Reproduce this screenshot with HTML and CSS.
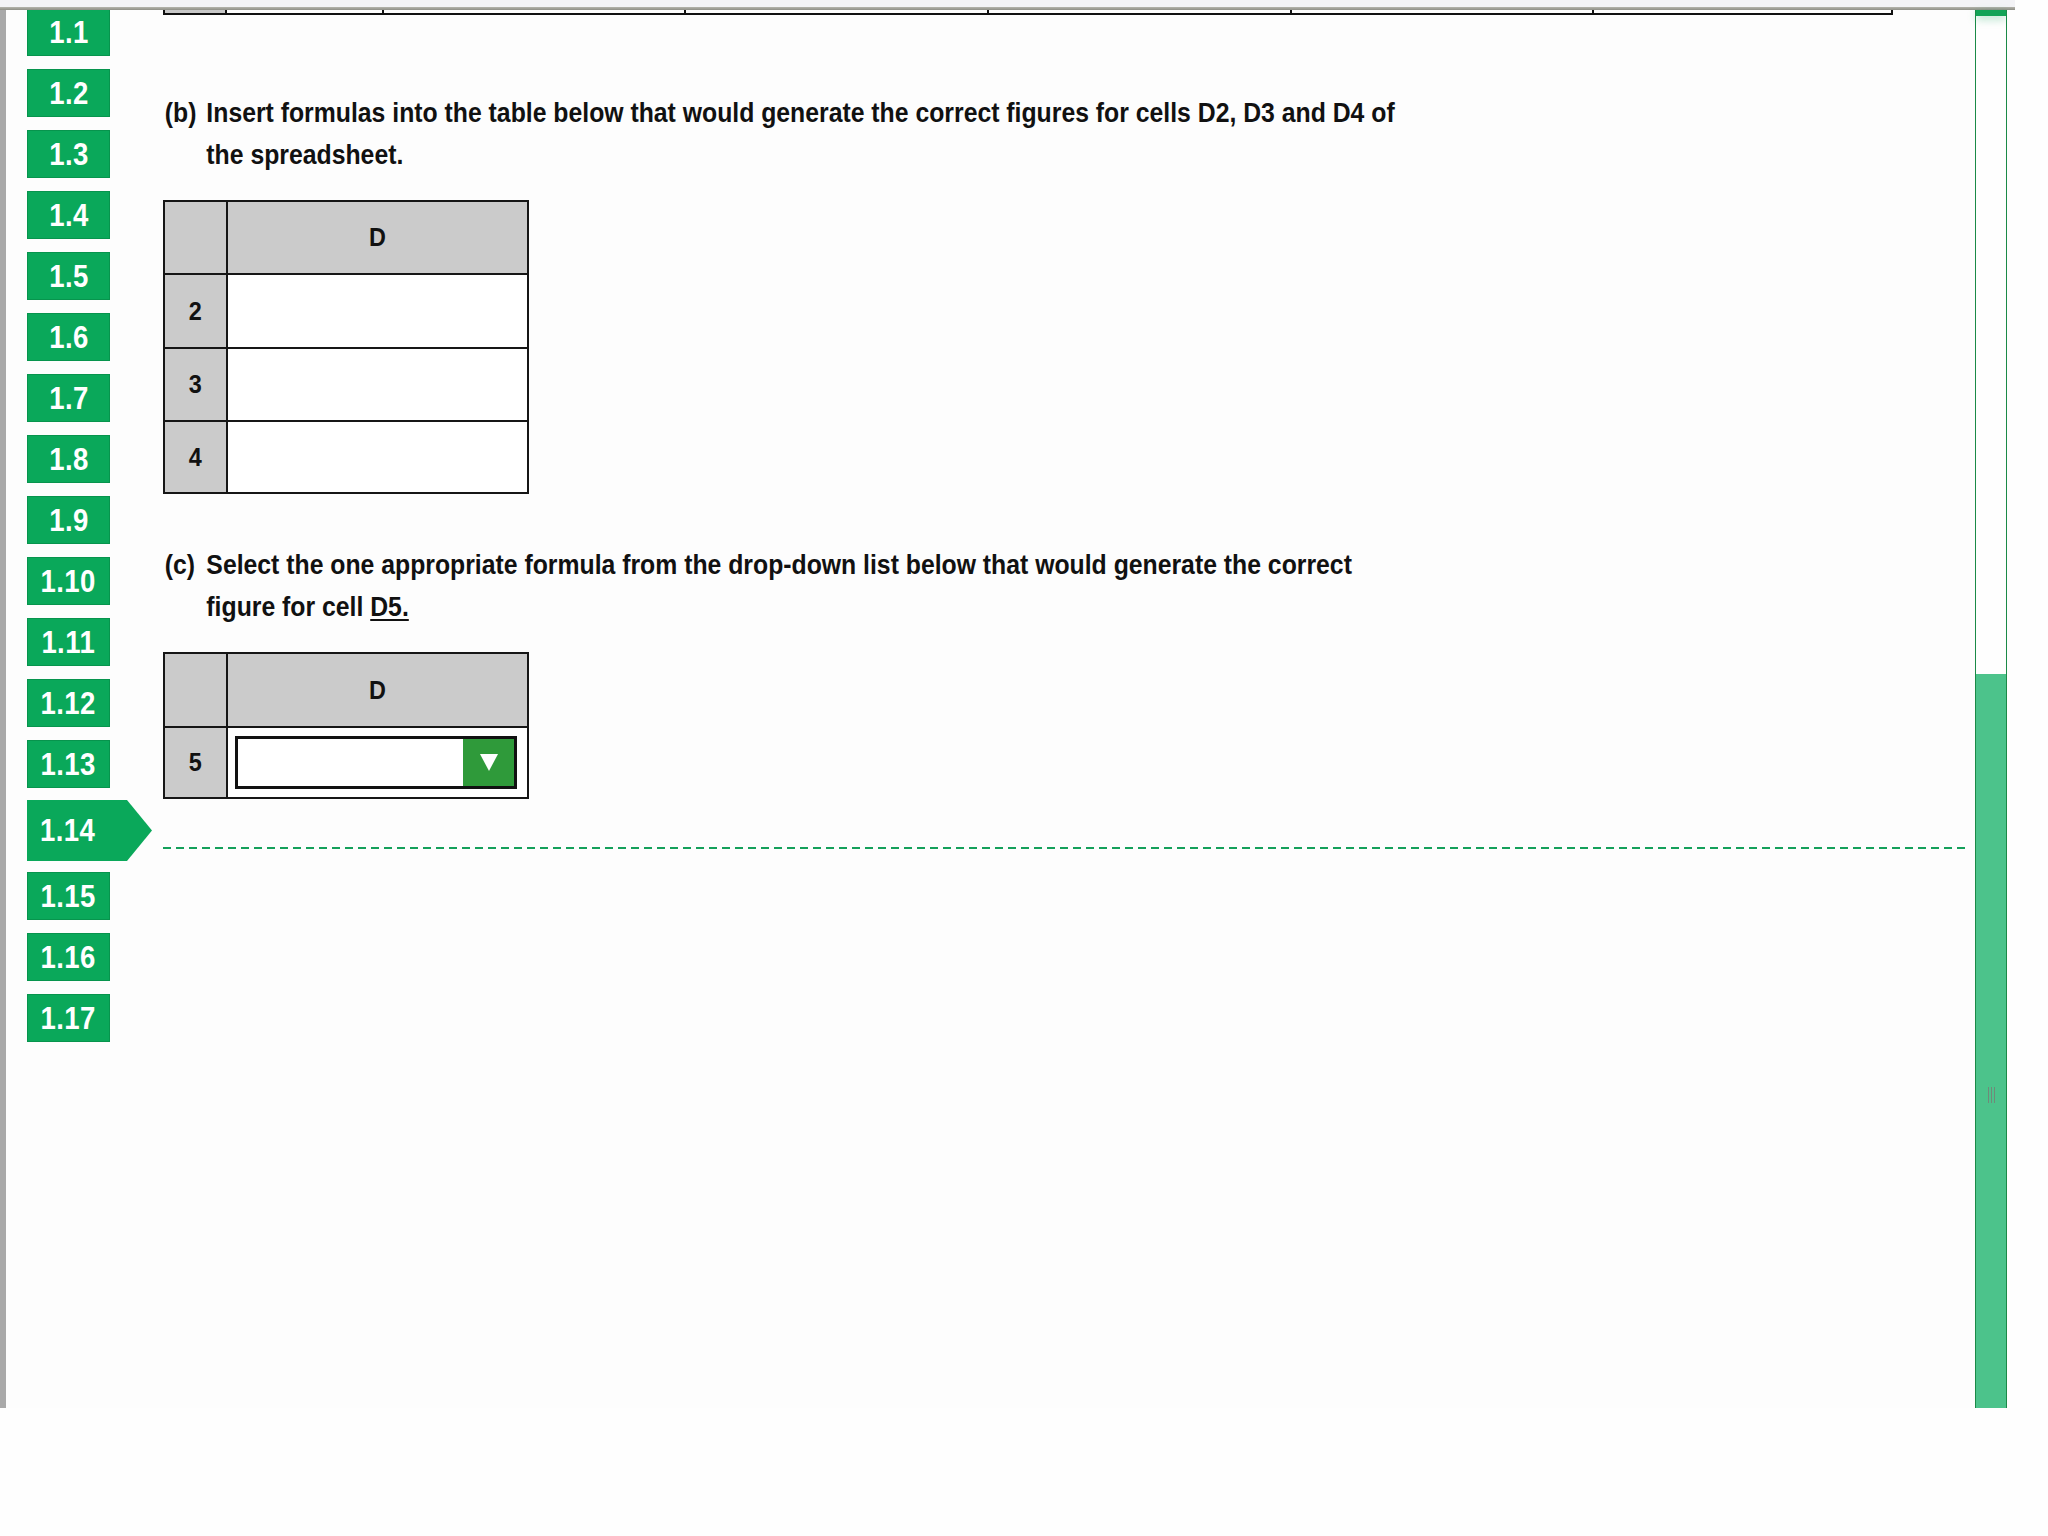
FILE: index.html
```html
<!DOCTYPE html>
<html lang="en">
<head>
<meta charset="utf-8">
<title>Question 1.14</title>
<link rel="stylesheet" href="styles.css">
</head>
<body>
<div class="window">
  <div class="titlestrip"></div>
  <div class="topline"></div>
  <div class="main">
    <div class="leftedge"></div>
    <nav class="nav">
      <div class="qbtn first"><span>1.1</span></div>
      <div class="qbtn"><span>1.2</span></div>
      <div class="qbtn"><span>1.3</span></div>
      <div class="qbtn"><span>1.4</span></div>
      <div class="qbtn"><span>1.5</span></div>
      <div class="qbtn"><span>1.6</span></div>
      <div class="qbtn"><span>1.7</span></div>
      <div class="qbtn"><span>1.8</span></div>
      <div class="qbtn"><span>1.9</span></div>
      <div class="qbtn"><span>1.10</span></div>
      <div class="qbtn"><span>1.11</span></div>
      <div class="qbtn"><span>1.12</span></div>
      <div class="qbtn"><span>1.13</span></div>
      <div class="qbtn current"><span>1.14</span></div>
      <div class="qbtn"><span>1.15</span></div>
      <div class="qbtn"><span>1.16</span></div>
      <div class="qbtn"><span>1.17</span></div>
    </nav>
    <section class="content">
      <div class="remnant">
        <div class="rcell head" style="width:62px"></div>
        <div class="rcell" style="width:157px"></div>
        <div class="rcell" style="width:302px"></div>
        <div class="rcell" style="width:303px"></div>
        <div class="rcell" style="width:303px"></div>
        <div class="rcell" style="width:302px"></div>
        <div class="rcell" style="width:299px"></div>
      </div>

      <div class="question qb">
        <span class="label">(b)</span>
        <p>Insert formulas into the table below that would generate the correct figures for cells D2, D3 and D4 of<br>the spreadsheet.</p>
      </div>

      <table class="sheet sheet1">
        <tr class="hrow"><th class="rowhead"></th><th><span class="c">D</span></th></tr>
        <tr class="r2"><th class="rowhead"><span class="c">2</span></th><td></td></tr>
        <tr class="r3"><th class="rowhead"><span class="c">3</span></th><td></td></tr>
        <tr class="r4"><th class="rowhead"><span class="c">4</span></th><td></td></tr>
      </table>

      <div class="question qc">
        <span class="label">(c)</span>
        <p>Select the one appropriate formula from the drop-down list below that would generate the correct<br>figure for cell <u>D5.</u></p>
      </div>

      <table class="sheet sheet2">
        <tr class="hrow"><th class="rowhead"></th><th><span class="c">D</span></th></tr>
        <tr class="r5"><th class="rowhead"><span class="c">5</span></th><td class="selcell">
          <div class="select"><div class="selfield"></div><div class="selbtn"><span class="tri"></span></div></div>
        </td></tr>
      </table>

      <div class="divider"></div>
    </section>
    <div class="scrollbar">
      <div class="track"><div class="cap"></div></div>
      <div class="thumb"><div class="grip"></div></div>
    </div>
    <div class="rightgap"></div>
  </div>
</div>
</body>
</html>
```
FILE: styles.css
```css
html, body {
  margin: 0;
  padding: 0;
  background: #fefefe;
}
body {
  width: 2048px;
  height: 1536px;
  overflow: hidden;
  font-family: "Liberation Sans", Arial, sans-serif;
  font-weight: bold;
  color: #111;
}
.window {
  width: 2015px;
}
.titlestrip {
  height: 7px;
  background: #f3f3f6;
}
.topline {
  height: 3px;
  background: linear-gradient(#b4b4ac, #8e8e86);
}
.main {
  display: flex;
  height: 1398px;
  background: #fdfdfd;
}
.leftedge {
  width: 6px;
  background: #a9a9a9;
}
.nav {
  width: 157px;
  padding-left: 21px;
  box-sizing: border-box;
  display: flex;
  flex-direction: column;
  overflow: hidden;
}
.qbtn {
  width: 83px;
  height: 48px;
  margin-bottom: 13px;
  background: #0aa85a;
  box-shadow: inset 0 0 0 1px #07944d;
  color: #fff;
  font-size: 32px;
  line-height: 48px;
  display: flex;
  justify-content: center;
  flex: none;
}
.qbtn span {
  display: inline-block;
  transform: scaleX(0.86);
  letter-spacing: 0.5px;
}
.qbtn.first {
  margin-top: -2px;
}
.qbtn.current {
  width: 125px;
  height: 61px;
  line-height: 61px;
  margin-top: -1px;
  margin-bottom: 11px;
  justify-content: flex-start;
  padding-left: 13px;
  box-sizing: border-box;
  box-shadow: none;
  clip-path: polygon(0 0, 100px 0, 125px 50%, 100px 100%, 0 100%);
}
.qbtn.current span {
  transform-origin: left center;
}
.content {
  width: 1812px;
  display: flex;
  flex-direction: column;
  align-items: flex-start;
}
.remnant {
  display: flex;
  height: 3px;
  border-bottom: 2px solid #111;
  border-left: 2px solid #111;
}
.rcell {
  border-right: 2px solid #111;
  box-sizing: border-box;
}
.rcell.head {
  background: #c8c8c8;
}
.question {
  display: flex;
  font-size: 28px;
  line-height: 42px;
  white-space: nowrap;
  transform: scaleX(0.885);
  transform-origin: left top;
}
.question .label {
  width: 49px;
  flex: none;
  padding-left: 2px;
  box-sizing: border-box;
}
.question p {
  margin: 0;
}
.qb {
  margin-top: 77px;
}
.qc {
  margin-top: 50px;
}
u {
  text-decoration-thickness: 2px;
  text-underline-offset: 3px;
}
.sheet {
  border-collapse: collapse;
  font-size: 26px;
}
.sheet .c {
  display: inline-block;
  transform: scaleX(0.9);
}
.sheet1 {
  margin-top: 24px;
}
.sheet2 {
  margin-top: 24px;
}
.sheet th, .sheet td {
  border: 2px solid #161616;
  padding: 0;
  text-align: center;
  vertical-align: middle;
}
.sheet .rowhead {
  width: 61px;
  background: #cbcbcb;
}
.sheet .hrow th {
  background: #cbcbcb;
  height: 71px;
  width: 299px;
}
.sheet .hrow th.rowhead {
  width: 61px;
}
.sheet td {
  width: 299px;
  background: #fff;
}
.sheet1 .r2 td, .sheet1 .r2 th { height: 72px; }
.sheet1 .r3 td, .sheet1 .r3 th { height: 71px; }
.sheet1 .r4 td, .sheet1 .r4 th { height: 70px; }
.sheet2 .hrow th { height: 72px; }
.sheet2 .r5 td, .sheet2 .r5 th { height: 69px; }
.selcell {
  padding: 0;
}
.select {
  display: flex;
  width: 282px;
  height: 53px;
  margin-left: 7px;
  box-sizing: border-box;
  border: 3px solid #111;
  background: #fff;
}
.selfield {
  flex: 1;
}
.selbtn {
  width: 51px;
  background: #2f9a3a;
  display: flex;
  align-items: center;
  justify-content: center;
}
.tri {
  width: 0;
  height: 0;
  border-left: 9px solid transparent;
  border-right: 9px solid transparent;
  border-top: 17px solid #fff;
}
.divider {
  margin-top: 48px;
  width: 1804px;
  height: 2px;
  background: repeating-linear-gradient(90deg, #14a05a 0 8px, transparent 8px 13px);
}
.scrollbar {
  width: 32px;
  display: flex;
  flex-direction: column;
  box-sizing: border-box;
  border-left: 1px solid #1b8a47;
  border-right: 1px solid #1b8a47;
}
.track {
  height: 664px;
  background: #fefefe;
}
.cap {
  height: 6px;
  background: #12a356;
  box-shadow: 0 3px 8px rgba(18, 163, 86, 0.35);
}
.thumb {
  flex: 1;
  background: #4cc38b;
  display: flex;
  align-items: center;
  justify-content: center;
}
.grip {
  width: 7px;
  height: 16px;
  margin-top: 108px;
  background: repeating-linear-gradient(90deg, #6f8a79 0 1px, transparent 1px 3px);
}
.rightgap {
  width: 8px;
  background: #fefefe;
}
```
